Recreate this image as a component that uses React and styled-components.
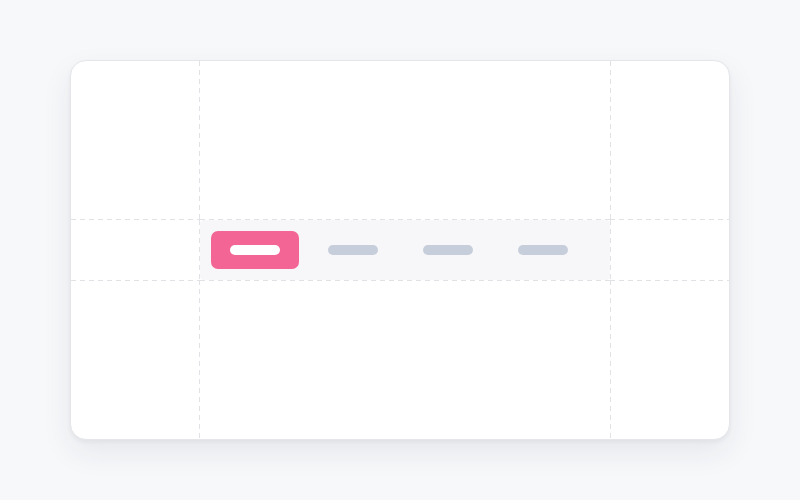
import React from "react";
import styled, { createGlobalStyle } from "styled-components";

const tabs = [true, false, false, false];

const App = () => {
  return (
    <>
      <GlobalStyle />
      <Page>
        <Card>
          <Cell $right $bottom />
          <Cell $bottom />
          <Cell $left $bottom />

          <Cell $right />
          <Strip>
            {tabs.map((active, i) => (
              <Tab key={i} $active={active}>
                <Pill $active={active} />
              </Tab>
            ))}
          </Strip>
          <Cell $left />

          <Cell $right $top />
          <Cell $top />
          <Cell $left $top />
        </Card>
      </Page>
    </>
  );
};

export default App;

const GlobalStyle = createGlobalStyle`
  html, body {
    margin: 0;
    padding: 0;
    background: #f7f8fa;
    font-family: Inter, "Liberation Sans", sans-serif;
  }
`;

const Page = styled.div`
  width: 100vw;
  height: 100vh;
  display: flex;
  align-items: center;
  justify-content: center;
`;

const Card = styled.div`
  width: 660px;
  height: 380px;
  box-sizing: border-box;
  background: #ffffff;
  border: 1px solid #e4e6e9;
  border-radius: 16px;
  box-shadow: 0 12px 30px rgba(30, 40, 60, 0.08), 0 2px 4px rgba(30, 40, 60, 0.05);
  display: grid;
  grid-template-columns: 129px 410px 1fr;
  grid-template-rows: 159px 60px 1fr;
  overflow: hidden;
`;

// dashed guide lines: 5px dash, 4px gap
const guideColor = "#e1e2e5";
const vDash = `linear-gradient(to bottom, ${guideColor} 5px, transparent 5px)`;
const hDash = `linear-gradient(to right, ${guideColor} 5px, transparent 5px)`;

const Cell = styled.div`
  box-sizing: border-box;
  background-image: ${(p) =>
    [
      p.$right && vDash,
      p.$left && vDash,
      p.$top && hDash,
      p.$bottom && hDash,
    ]
      .filter(Boolean)
      .join(", ") || "none"};
  background-size: ${(p) =>
    [
      p.$right && "1px 9px",
      p.$left && "1px 9px",
      p.$top && "9px 1px",
      p.$bottom && "9px 1px",
    ]
      .filter(Boolean)
      .join(", ") || "auto"};
  background-position: ${(p) =>
    [
      p.$right && "right top",
      p.$left && "left top",
      p.$top && "left top",
      p.$bottom && "left bottom",
    ]
      .filter(Boolean)
      .join(", ") || "0 0"};
  background-repeat: ${(p) =>
    [
      p.$right && "repeat-y",
      p.$left && "repeat-y",
      p.$top && "repeat-x",
      p.$bottom && "repeat-x",
    ]
      .filter(Boolean)
      .join(", ") || "no-repeat"};
`;

const Strip = styled.div`
  background: #f7f7f9;
  border-radius: 4px;
  display: flex;
  align-items: center;
  padding: 0 11px;
`;

const Tab = styled.div`
  width: ${(p) => (p.$active ? "88px" : "95px")};
  margin-right: ${(p) => (p.$active ? "6px" : "0")};
  height: 38px;
  border-radius: 7px;
  background: ${(p) => (p.$active ? "#f26594" : "transparent")};
  display: flex;
  align-items: center;
  justify-content: center;
`;

const Pill = styled.span`
  display: block;
  width: 50px;
  height: 10px;
  border-radius: 5px;
  background: ${(p) => (p.$active ? "#ffffff" : "#c7cedb")};
`;
